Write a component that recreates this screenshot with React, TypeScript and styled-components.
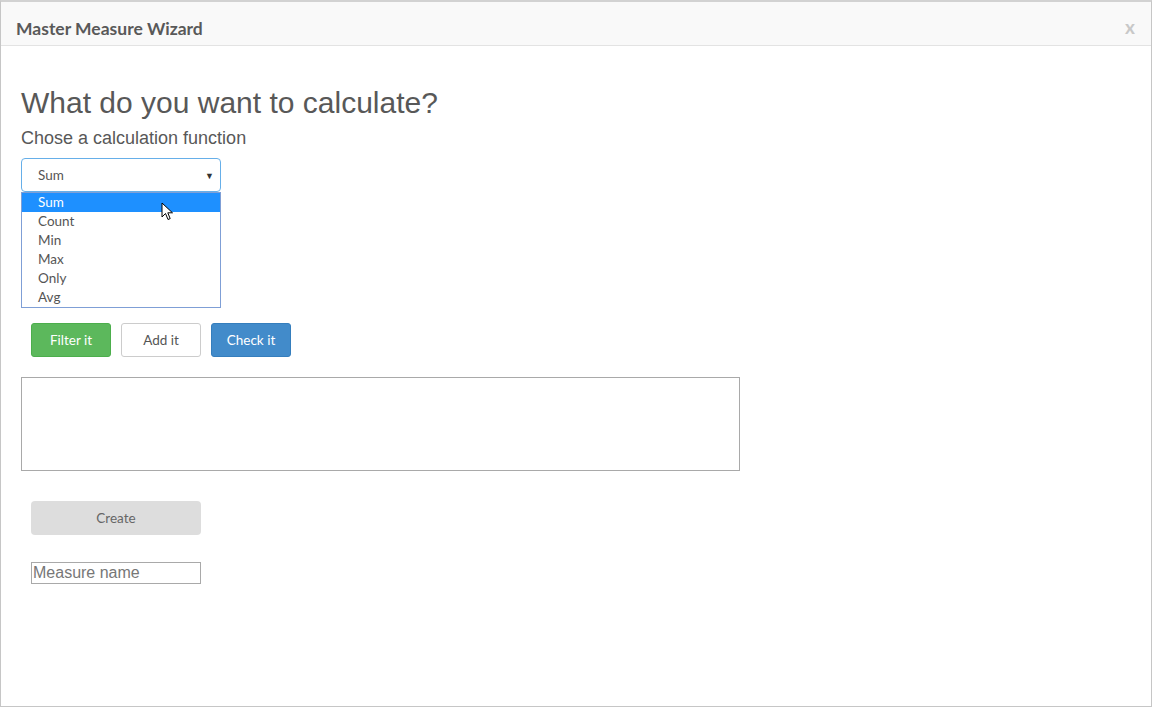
import React from "react";
import styled, { createGlobalStyle } from "styled-components";

const Global = createGlobalStyle`
  html, body { margin: 0; padding: 0; background: #fff; }
  body { width: 1153px; height: 707px; overflow: hidden; }
  * { box-sizing: border-box; }
`;

const Modal = styled.div`
  width: 1152px;
  height: 707px;
  border: 1px solid #c6c6c6;
  border-top: 2px solid #d2d2d2;
  background: #fff;
  display: flex;
  flex-direction: column;
  position: relative;
`;

const Header = styled.div`
  height: 44px;
  background: #f9f9f9;
  border-bottom: 1px solid #e3e3e3;
  display: flex;
  align-items: center;
  justify-content: space-between;
  padding: 9px 16px 0 15px;
`;

const Title = styled.h4`
  margin: 0;
  font-family: Lato, "Open Sans", sans-serif;
  font-weight: 700;
  font-size: 17.5px;
  color: #595959;
`;

const Close = styled.span`
  font-family: Lato, sans-serif;
  font-weight: 700;
  font-size: 19px;
  color: #c8c8c8;
  margin-top: -4px;
`;

const Body = styled.div`
  padding: 40px 20px 0 20px;
  display: flex;
  flex-direction: column;
  align-items: flex-start;
`;

const Heading = styled.h1`
  margin: 0;
  font-family: "Liberation Sans", Arial, sans-serif;
  font-weight: 400;
  font-size: 30px;
  line-height: 34px;
  color: #585858;
`;

const Sub = styled.p`
  margin: 8px 0 0 0;
  font-family: "Liberation Sans", Arial, sans-serif;
  font-size: 18px;
  line-height: 21px;
  color: #585858;
`;

const SelectWrap = styled.div`
  margin-top: 9px;
  width: 200px;
  position: relative;
`;

const SelectBox = styled.div`
  height: 34px;
  border: 1px solid #66afe9;
  border-radius: 4px;
  display: flex;
  align-items: center;
  justify-content: space-between;
  padding: 0 6px 0 16px;
  font-family: Lato, sans-serif;
  font-size: 13.5px;
  color: #555;
`;

const Caret = styled.span`
  font-size: 9px;
  color: #333;
`;

const List = styled.ul`
  margin: 0;
  padding: 0 0 1px 0;
  list-style: none;
  border: 1px solid #7f9fd6;
  width: 200px;
  height: 116px;
`;

const Item = styled.li<{ $active?: boolean }>`
  height: 19px;
  line-height: 19px;
  padding-left: 16px;
  font-family: Lato, sans-serif;
  font-size: 13.5px;
  color: ${(p) => (p.$active ? "#fff" : "#555")};
  background: ${(p) => (p.$active ? "#1e90ff" : "transparent")};
`;

const Cursor = styled.svg`
  position: absolute;
  left: 140px;
  top: 44px;
`;

const ButtonRow = styled.div`
  display: flex;
  gap: 10px;
  margin: 15px 0 0 10px;
`;

const Btn = styled.button<{ $kind: "success" | "default" | "primary" }>`
  width: 80px;
  height: 34px;
  border-radius: 3px;
  font-family: Lato, sans-serif;
  font-size: 13.5px;
  cursor: pointer;
  border: 1px solid
    ${(p) => (p.$kind === "success" ? "#4cae4c" : p.$kind === "primary" ? "#357ebd" : "#ccc")};
  background: ${(p) => (p.$kind === "success" ? "#5cb85c" : p.$kind === "primary" ? "#428bca" : "#fff")};
  color: ${(p) => (p.$kind === "default" ? "#555" : "#fff")};
`;

const Output = styled.div`
  margin-top: 20px;
  width: 719px;
  height: 94px;
  border: 1px solid #a9a9a9;
`;

const CreateBtn = styled.button`
  margin: 30px 0 0 10px;
  width: 170px;
  height: 34px;
  border: none;
  border-radius: 4px;
  background: #dddddd;
  color: #666;
  font-family: Lato, sans-serif;
  font-size: 13.5px;
`;

const NameInput = styled.input`
  margin: 27px 0 0 10px;
  width: 170px;
  height: 22px;
  border: 1px solid #a9a9a9;
  padding: 0 1px;
  font-family: "Liberation Sans", Arial, sans-serif;
  font-size: 16px;
  color: #555;
  &::placeholder { color: #777; }
  outline: none;
`;

const options = ["Sum", "Count", "Min", "Max", "Only", "Avg"];

export default function App() {
  return (
    <>
      <Global />
      <Modal>
        <Header>
          <Title>Master Measure Wizard</Title>
          <Close>x</Close>
        </Header>
        <Body>
          <Heading>What do you want to calculate?</Heading>
          <Sub>Chose a calculation function</Sub>
          <SelectWrap>
            <SelectBox>
              <span>Sum</span>
              <Caret>▼</Caret>
            </SelectBox>
            <List>
              {options.map((o, i) => (
                <Item key={o} $active={i === 0}>
                  {o}
                </Item>
              ))}
            </List>
            <Cursor width="14" height="20" viewBox="0 0 14 20">
              <path
                d="M1 1 L1 15 L4.5 11.5 L7 17.5 L9.2 16.6 L6.8 10.8 L11.5 10.8 Z"
                fill="#fff"
                stroke="#000"
                strokeWidth="1"
                strokeLinejoin="round"
              />
            </Cursor>
          </SelectWrap>
          <ButtonRow>
            <Btn $kind="success">Filter it</Btn>
            <Btn $kind="default">Add it</Btn>
            <Btn $kind="primary">Check it</Btn>
          </ButtonRow>
          <Output />
          <CreateBtn>Create</CreateBtn>
          <NameInput placeholder="Measure name" />
        </Body>
      </Modal>
    </>
  );
}
